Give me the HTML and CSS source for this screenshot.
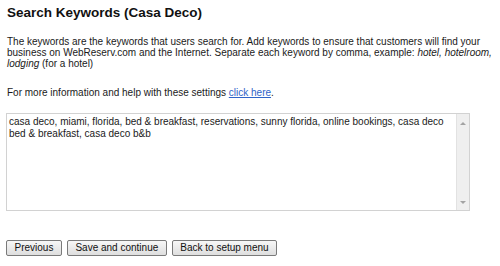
FILE: index.html
```html
<!DOCTYPE html>
<html lang="en">
<head>
<meta charset="utf-8">
<title>Search Keywords (Casa Deco)</title>
<link rel="stylesheet" href="styles.css">
</head>
<body>
<div class="page">
  <h1 class="title">Search Keywords (Casa Deco)</h1>
  <p class="intro">The keywords are the keywords that users search for. Add keywords to ensure that customers will find your business on WebReserv.com and the Internet. Separate each keyword by comma, example: <em>hotel, hotelroom, lodging</em> (for a hotel)</p>
  <p class="help">For more information and help with these settings <a href="#" class="link">click here</a>.</p>
  <div class="keywords">
    <textarea class="keywords-input" rows="8">casa deco, miami, florida, bed &amp; breakfast, reservations, sunny florida, online bookings, casa deco bed &amp; breakfast, casa deco b&amp;b</textarea>
    <div class="scrollbar">
      <span class="arrow arrow-up"></span>
      <span class="arrow arrow-down"></span>
    </div>
  </div>
  <div class="actions">
    <button class="btn" type="button">Previous</button>
    <button class="btn" type="button">Save and continue</button>
    <button class="btn" type="button">Back to setup menu</button>
  </div>
</div>
</body>
</html>
```
FILE: styles.css
```css
html, body {
  margin: 0;
  padding: 0;
  background: #ffffff;
}

body {
  font-family: "Liberation Sans", Arial, sans-serif;
  color: #1a1a1a;
  font-size: 10px;
}

.page {
  padding: 5px 2px 0 6px;
}

.title {
  margin: 0;
  padding-left: 1px;
  font-size: 13.5px;
  line-height: 16px;
  font-weight: bold;
  color: #111111;
}

.intro,
.help {
  margin: 0;
  padding-left: 1px;
  font-size: 10px;
  line-height: 11px;
}

.intro {
  margin-top: 15px;
}

.help {
  margin-top: 18px;
}

.link {
  color: #2f64c8;
  text-decoration: underline;
}

.keywords {
  margin-top: 15px;
  width: 464px;
  height: 98px;
  box-sizing: border-box;
  border: 1px solid #d2d2d2;
  display: flex;
  background: #ffffff;
}

.keywords-input {
  flex: 1;
  margin: 0;
  border: 0;
  outline: none;
  resize: none;
  overflow: hidden;
  padding: 2px 2px 0 2px;
  font-family: "Liberation Sans", Arial, sans-serif;
  font-size: 10px;
  line-height: 11.5px;
  color: #1a1a1a;
  background: #ffffff;
}

.scrollbar {
  width: 12px;
  background: #efefef;
  border-left: 1px solid #e2e2e2;
  display: flex;
  flex-direction: column;
  justify-content: space-between;
  align-items: center;
  padding: 8px 0 6px;
}

.arrow {
  width: 0;
  height: 0;
  border-left: 3px solid transparent;
  border-right: 3px solid transparent;
}

.arrow-up {
  border-bottom: 3px solid #a3a3a3;
}

.arrow-down {
  border-top: 3px solid #a3a3a3;
}

.actions {
  margin-top: 29px;
  display: flex;
  gap: 5px;
}

.btn {
  margin: 0;
  height: 16px;
  padding: 0 7.5px;
  font-family: "Liberation Sans", Arial, sans-serif;
  font-size: 10px;
  line-height: 14px;
  color: #111111;
  border: 1px solid #7a7a7a;
  border-radius: 2px;
  background: linear-gradient(#f7f7f7, #dedede);
}
```
